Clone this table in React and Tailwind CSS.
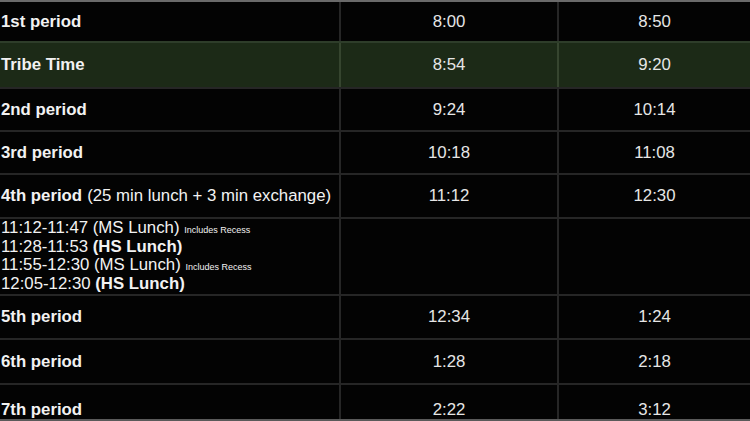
const rows = [
  { label: "1st period", start: "8:00", end: "8:50", h: "h-[39px]" },
  { label: "Tribe Time", start: "8:54", end: "9:20", h: "h-[46px]", green: true },
  { label: "2nd period", start: "9:24", end: "10:14", h: "h-[43px]" },
  { label: "3rd period", start: "10:18", end: "11:08", h: "h-[43px]" },
  { label: "4th period", note: "(25 min lunch + 3 min exchange)", start: "11:12", end: "12:30", h: "h-[44px]" },
  { lunch: true, h: "h-[77px]" },
  { label: "5th period", start: "12:34", end: "1:24", h: "h-[44px]" },
  { label: "6th period", start: "1:28", end: "2:18", h: "h-[45px]" },
  { label: "7th period", start: "2:22", end: "3:12", h: "h-[52px]" },
];

const lunches = [
  { time: "11:12-11:47", name: "(MS Lunch)", recess: true },
  { time: "11:28-11:53", name: "(HS Lunch)" },
  { time: "11:55-12:30", name: "(MS Lunch)", recess: true },
  { time: "12:05-12:30", name: "(HS Lunch)" },
];

export default function App() {
  return (
    <div
      className="h-[421px] w-[750px] overflow-hidden bg-[#030303] border-t-2 border-b-2 border-t-[#6a6a6a] border-b-[#5a5a5a] text-[16.8px] text-[#f2f2f2]"
      style={{ fontFamily: '"Liberation Sans", Arial, sans-serif' }}
    >
      {rows.map((r, i) => (
        <div
          key={i}
          className={`grid grid-cols-[339px_218px_1fr] ${r.h} ${i > 0 ? "border-t-2" : ""} ${
            r.green ? "bg-[#1c2a17] border-[#2e3d2a]" : "border-[#262626]"
          }`}
        >
          {r.lunch ? (
            <div className="flex flex-col pl-[1px] leading-[18.7px]">
              {lunches.map((l, j) => (
                <div key={j} className="whitespace-nowrap">
                  {l.time}{" "}
                  {l.recess ? (
                    <>
                      {l.name} <span className="text-[9px] leading-none">Includes Recess</span>
                    </>
                  ) : (
                    <b>{l.name}</b>
                  )}
                </div>
              ))}
            </div>
          ) : (
            <div className="flex items-center gap-[5px] pl-[1px] whitespace-nowrap">
              <b>{r.label}</b>
              {r.note && <span>{r.note}</span>}
            </div>
          )}
          <div
            className={`flex items-center justify-center border-l-2 text-[#e6e6e6] ${
              r.green ? "border-[#36452f]" : "border-[#262626]"
            }`}
          >
            {r.start}
          </div>
          <div
            className={`flex items-center justify-center border-l-2 text-[#e6e6e6] ${
              r.green ? "border-[#36452f]" : "border-[#262626]"
            }`}
          >
            {r.end}
          </div>
        </div>
      ))}
    </div>
  );
}
